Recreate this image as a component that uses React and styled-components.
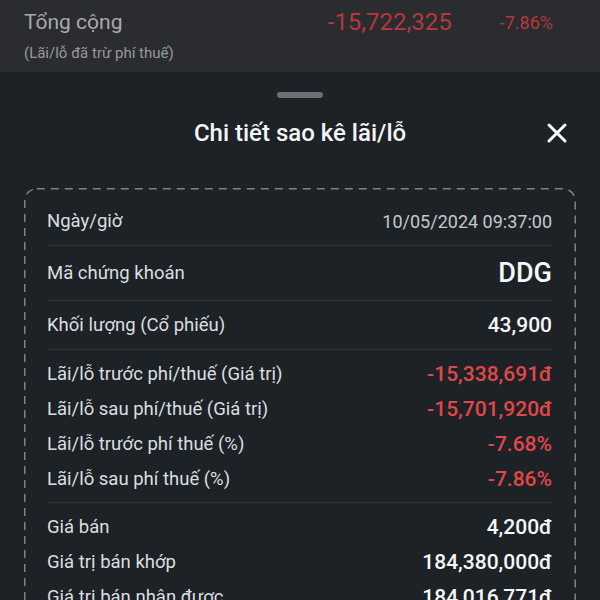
import React from 'react';
import styled, { createGlobalStyle } from 'styled-components';

const GlobalStyle = createGlobalStyle`
    html, body {
        margin: 0;
        padding: 0;
        background: #1d2226;
        font-family: Roboto, "Noto Sans", "Liberation Sans", sans-serif;
    }
`;

const Page = styled.div`
    width: 600px;
    height: 600px;
    overflow: hidden;
    background: #1d2226;
`;

const Summary = styled.div`
    height: 72px;
    box-sizing: border-box;
    padding: 8px 47px 0 24px;
    background: #2a2c2f;
`;

const SummaryRow = styled.div`
    display: grid;
    grid-template-columns: 1fr auto auto;
    column-gap: 48px;
    align-items: center;
    height: 28px;
`;

const SummaryLabel = styled.div`
    font-size: 21px;
    color: #a8aaac;
`;

const SummaryValue = styled.div`
    font-size: ${p => p.size}px;
    color: #b5393c;
`;

const SummaryNote = styled.div`
    margin-top: 7px;
    font-size: 15px;
    line-height: 20px;
    color: #98999b;
`;

const Handle = styled.div`
    width: 46px;
    height: 6px;
    margin: 20px auto 0;
    border-radius: 3px;
    background: #6b7076;
`;

const Header = styled.div`
    display: grid;
    grid-template-columns: 1fr auto 1fr;
    align-items: center;
    height: 48px;
    margin-top: 11px;
    padding: 0 32px;
`;

const Title = styled.div`
    grid-column: 2;
    font-size: 24px;
    font-weight: 500;
    color: #f4f5f6;
`;

const CloseButton = styled.button`
    grid-column: 3;
    justify-self: end;
    display: flex;
    padding: 0;
    border: 0;
    background: none;
    cursor: pointer;
`;

const Card = styled.div`
    position: relative;
    margin: 31px 24px 0;
    padding: 9px 24px 0 23px;
`;

const DashedEdge = styled.svg`
    position: absolute;
    left: 0;
    top: 0;
    width: 100%;
    height: 520px;
    pointer-events: none;
`;

const Section = styled.div`
    padding: 6px 0;
    border-bottom: ${p => (p.last ? 'none' : '1px solid #2e3438')};
`;

const Row = styled.div`
    display: flex;
    justify-content: space-between;
    align-items: center;
    height: ${p => p.h || 35}px;
`;

const Label = styled.div`
    font-size: 18.5px;
    color: #dcdee0;
`;

const Value = styled.div`
    font-size: ${p => p.size || 21}px;
    font-weight: ${p => (p.plain ? 400 : 500)};
    color: ${p => (p.red ? '#e2474a' : p.plain ? '#c6c8ca' : '#f6f7f8')};
`;

const CloseIcon = () => (
    <svg width='22' height='22' viewBox='0 0 22 22'>
        <path d='M3 3L19 19M19 3L3 19' stroke='#ffffff' strokeWidth='3' strokeLinecap='round' />
    </svg>
);

const sections = [
    [{ label: 'Ngày/giờ', value: '10/05/2024 09:37:00', plain: true, size: 18, h: 36 }],
    [{ label: 'Mã chứng khoán', value: 'DDG', size: 27, h: 42 }],
    [{ label: 'Khối lượng (Cổ phiếu)', value: '43,900', h: 36 }],
    [
        { label: 'Lãi/lỗ trước phí/thuế (Giá trị)', value: '-15,338,691đ', red: true },
        { label: 'Lãi/lỗ sau phí/thuế (Giá trị)', value: '-15,701,920đ', red: true },
        { label: 'Lãi/lỗ trước phí thuế (%)', value: '-7.68%', red: true },
        { label: 'Lãi/lỗ sau phí thuế (%)', value: '-7.86%', red: true }
    ],
    [
        { label: 'Giá bán', value: '4,200đ' },
        { label: 'Giá trị bán khớp', value: '184,380,000đ' },
        { label: 'Giá trị bán nhận được', value: '184,016,771đ' }
    ]
];

export default function App () {
    return (
        <Page>
            <GlobalStyle />
            <Summary>
                <SummaryRow>
                    <SummaryLabel>Tổng cộng</SummaryLabel>
                    <SummaryValue size={24}>-15,722,325</SummaryValue>
                    <SummaryValue size={18}>-7.86%</SummaryValue>
                </SummaryRow>
                <SummaryNote>(Lãi/lỗ đã trừ phí thuế)</SummaryNote>
            </Summary>

            <Handle />
            <Header>
                <Title>Chi tiết sao kê lãi/lỗ</Title>
                <CloseButton aria-label='Đóng'>
                    <CloseIcon />
                </CloseButton>
            </Header>

            <Card>
                <DashedEdge preserveAspectRatio='none'>
                    <rect x='0.75' y='0.75' width='550.5' height='600' rx='12'
                      fill='none' stroke='#7e8286' strokeWidth='1.5' strokeDasharray='8 6' />
                </DashedEdge>
                {sections.map((rows, i) => (
                    <Section key={i} last={i === sections.length - 1}>
                        {rows.map(r => (
                            <Row key={r.label} h={r.h}>
                                <Label>{r.label}</Label>
                                <Value red={r.red} plain={r.plain} size={r.size}>{r.value}</Value>
                            </Row>
                        ))}
                    </Section>
                ))}
            </Card>
        </Page>
    );
}
